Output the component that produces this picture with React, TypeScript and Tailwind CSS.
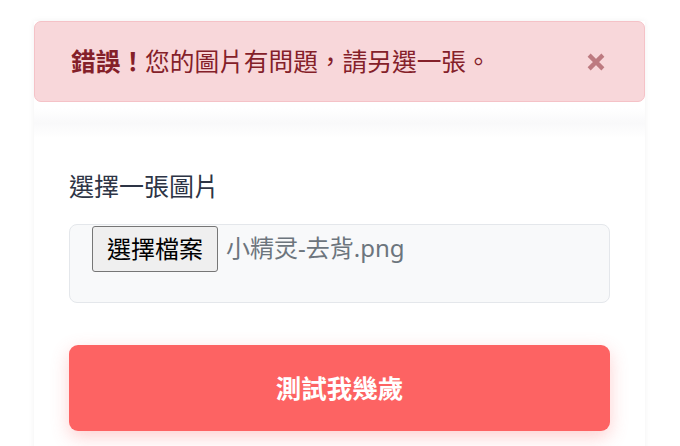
import React from "react";

const font = { fontFamily: '"Noto Sans", "Noto Sans CJK TC", sans-serif' };

function ErrorAlert() {
  return (
    <div className="flex h-[81px] items-center justify-between rounded-[7px] border border-[#f5c2c7] bg-[#f8d7da] pl-[36px] pr-[36px] text-[24.7px] text-[#842029]">
      <p className="leading-none mt-[2px]">
        <span className="font-bold">錯誤！</span>
        <span>您的圖片有問題，請另選一張。</span>
      </p>
      <button className="flex h-[24px] w-[24px] items-center justify-center text-[#842029] opacity-50">
        <svg viewBox="0 0 16 16" className="h-[20px] w-[20px]">
          <path d="M2.5 2.5 L13.5 13.5 M13.5 2.5 L2.5 13.5" stroke="currentColor" strokeWidth="3.4" strokeLinecap="butt" />
        </svg>
      </button>
    </div>
  );
}

export default function App() {
  return (
    <div className="min-h-screen bg-white pt-[21px]" style={font}>
      <div className="ml-[34px] w-[611px] bg-white shadow-[0_0_6px_rgba(0,0,0,0.06)]">
        <ErrorAlert />
        <div className="bg-gradient-to-b from-white via-[#f9f9fa] to-white h-[30px] mt-[6px]" />
        <div className="px-[35px] pb-[30px]">
          <label className="mt-[30px] block text-[25px] leading-[36px] text-[#2d3445]">選擇一張圖片</label>
          <div className="mt-[20px] h-[79px] rounded-[8px] border border-[#e4e7eb] bg-[#f8f9fa] pl-[22px] pt-[1px]">
            <div className="flex items-center gap-[8px]">
              <div className="flex h-[46px] items-center rounded-[3px] border border-[#767676] bg-[#efefef] px-[14px] text-[24px] text-black">
                選擇檔案
              </div>
              <span className="text-[24px] leading-none text-[#6c757d] -mt-[2px]">小精灵-去背.png</span>
            </div>
          </div>
          <button className="mt-[42px] flex h-[86px] w-full items-center justify-center rounded-[9px] bg-[#fd6363] text-[25.5px] font-bold text-white shadow-[0_6px_18px_rgba(253,99,99,0.3)]">
            測試我幾歲
          </button>
        </div>
      </div>
    </div>
  );
}
